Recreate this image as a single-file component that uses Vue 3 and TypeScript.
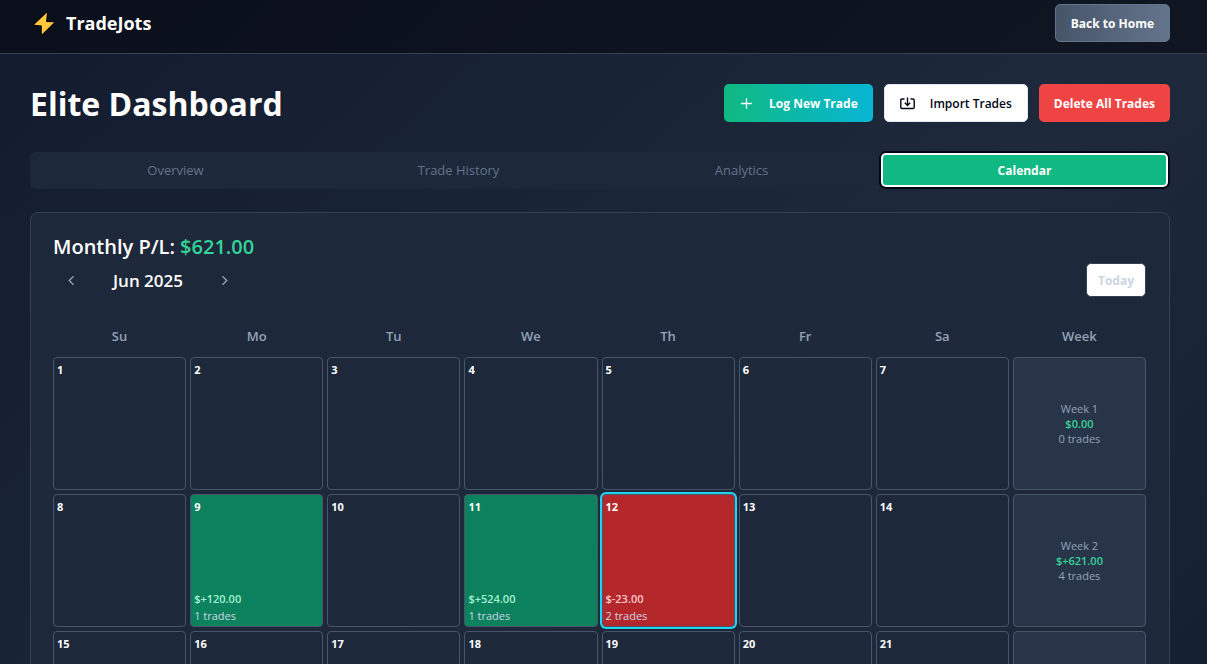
<script setup lang="ts">
import { computed, ref } from 'vue'

interface DayResult {
  pnl: number
  trades: number
}

const tabs = ['Overview', 'Trade History', 'Analytics', 'Calendar']
const activeTab = ref('Calendar')
const weekdays = ['Su', 'Mo', 'Tu', 'We', 'Th', 'Fr', 'Sa', 'Week']
const today = 12
const daysInMonth = 30

const results: Record<number, DayResult> = {
  9: { pnl: 120, trades: 1 },
  11: { pnl: 524, trades: 1 },
  12: { pnl: -23, trades: 2 },
}

const weeks = computed(() =>
  Array.from({ length: 5 }, (_, w) => {
    const days = Array.from({ length: 7 }, (_, d) => w * 7 + d + 1).filter((d) => d <= daysInMonth)
    return {
      number: w + 1,
      days,
      blanks: 7 - days.length,
      pnl: days.reduce((sum, d) => sum + (results[d]?.pnl ?? 0), 0),
      trades: days.reduce((sum, d) => sum + (results[d]?.trades ?? 0), 0),
    }
  }),
)

const monthTotal = computed(() => weeks.value.reduce((sum, w) => sum + w.pnl, 0))

function signed(value: number): string {
  return '$' + (value > 0 ? '+' : '') + value.toFixed(2)
}

function tone(day: number): string {
  const result = results[day]
  if (!result) return ''
  return result.pnl > 0 ? 'win' : 'loss'
}
</script>

<template>
  <div class="page">
    <header class="topbar">
      <a class="brand" href="#">
        <svg class="bolt" viewBox="0 0 28 28" aria-hidden="true">
          <path d="M17 3.5 4 15.7 11.8 16.6 11.8 25.5 24.3 13.3 16 12.9Z" />
        </svg>
        <span>TradeJots</span>
      </a>
      <button type="button" class="btn home">Back to Home</button>
    </header>

    <main class="content">
      <div class="heading">
        <h1>Elite Dashboard</h1>
        <div class="actions">
          <button type="button" class="btn log">
            <svg viewBox="0 0 15 15" aria-hidden="true"><path d="M7.5 2.2v10.6M2.2 7.5h10.6" /></svg>
            <span>Log New Trade</span>
          </button>
          <button type="button" class="btn import">
            <svg viewBox="0 0 15 15" aria-hidden="true">
              <path d="M4.5 3H2Q.8 3 .8 4.2v7.1q0 1.2 1.2 1.2h11q1.2 0 1.2-1.2V4.2Q14.2 3 13 3h-2.5M7.5 1.5v8M4.8 6.8l2.7 2.7 2.7-2.7" />
            </svg>
            <span>Import Trades</span>
          </button>
          <button type="button" class="btn delete">Delete All Trades</button>
        </div>
      </div>

      <div class="tabs" role="tablist">
        <button
          v-for="tab in tabs"
          :key="tab"
          type="button"
          role="tab"
          class="tab"
          :class="{ active: tab === activeTab }"
          :aria-selected="tab === activeTab"
          @click="activeTab = tab"
        >
          {{ tab }}
        </button>
      </div>

      <section class="card">
        <h2>Monthly P/L: <span class="gain">${{ monthTotal.toFixed(2) }}</span></h2>
        <div class="monthnav">
          <button type="button" class="arrow" aria-label="Previous month">
            <svg viewBox="0 0 15 15" aria-hidden="true"><path d="M9.5 3.2 5.2 7.5l4.3 4.3" /></svg>
          </button>
          <h3>Jun 2025</h3>
          <button type="button" class="arrow" aria-label="Next month">
            <svg viewBox="0 0 15 15" aria-hidden="true"><path d="m5.5 3.2 4.3 4.3-4.3 4.3" /></svg>
          </button>
          <button type="button" class="today" disabled>Today</button>
        </div>

        <div class="grid">
          <div v-for="name in weekdays" :key="name" class="weekday">{{ name }}</div>
          <template v-for="week in weeks" :key="week.number">
            <button
              v-for="day in week.days"
              :key="day"
              type="button"
              class="cell day"
              :class="[tone(day), { current: day === today }]"
            >
              <span class="num">{{ day }}</span>
              <span v-if="results[day]" class="result">
                <strong>{{ signed(results[day].pnl) }}</strong>
                <span>{{ results[day].trades }} trades</span>
              </span>
            </button>
            <div v-for="blank in week.blanks" :key="'b' + blank" class="cell"></div>
            <div class="cell summary">
              <span>Week {{ week.number }}</span>
              <strong>{{ signed(week.pnl) }}</strong>
              <span>{{ week.trades }} trades</span>
            </div>
          </template>
        </div>
      </section>
    </main>
  </div>
</template>

<style>
html {
  scrollbar-width: none;
}
body {
  margin: 0;
  background: #0f172a;
}
</style>

<style scoped>
.page {
  min-height: 100vh;
  background: linear-gradient(to bottom right, #131b2f, #1e293b, #111a2d);
  color: #fff;
  font-family: 'Segoe UI', 'Open Sans', 'Noto Sans', sans-serif;
  font-size: 13px;
}
.page * {
  box-sizing: border-box;
}
button {
  font: inherit;
  color: inherit;
  cursor: pointer;
}
svg {
  fill: none;
  stroke: currentColor;
}
.topbar {
  display: flex;
  align-items: center;
  justify-content: space-between;
  padding: 4px 37px 11px 30px;
  border-bottom: 1px solid #334155;
  background: rgba(2, 3, 8, 0.5);
}
.brand {
  display: flex;
  align-items: center;
  gap: 8px;
  color: #fff;
  font-size: 18px;
  font-weight: 700;
  text-decoration: none;
}
.bolt {
  width: 28px;
  height: 28px;
  fill: #ffc83d;
  stroke: #000;
  stroke-width: 2;
  stroke-linejoin: round;
  paint-order: stroke;
}
.btn {
  display: flex;
  align-items: center;
  height: 38px;
  padding: 0 15px;
  border: 0;
  border-radius: 5px;
  font-size: 12px;
  font-weight: 700;
  white-space: nowrap;
}
.btn svg {
  width: 15px;
  height: 15px;
  margin-right: 15px;
}
.home {
  border: 1px solid #64748b;
  background: linear-gradient(to right, #475569, #64748b);
}
.content {
  padding: 30px 37px 30px 30px;
}
.heading {
  display: flex;
  align-items: center;
  justify-content: space-between;
  height: 38px;
}
h1,
h2,
h3 {
  margin: 0;
}
h1 {
  padding-top: 2px;
  font-size: 32px;
  line-height: 38px;
  font-weight: 700;
}
.actions {
  display: flex;
  gap: 11px;
}
.log {
  background: linear-gradient(to right, #10b981, #06b6d4);
}
.log svg {
  stroke-width: 1.3;
}
.import {
  border: 1px solid #e2e8f0;
  background: #fff;
  color: #020617;
  font-weight: 600;
}
.import svg {
  stroke-width: 1.4;
}
.delete {
  background: #ef4444;
}
.tabs {
  display: grid;
  grid-template-columns: repeat(4, 1fr);
  margin-top: 30px;
  padding: 3px 4px 4px;
  border-radius: 6px;
  background: rgba(30, 41, 59, 0.9);
}
.tab {
  height: 30px;
  padding: 0;
  border: 0;
  border-radius: 3px;
  background: none;
  color: #64748b;
  font-weight: 500;
}
.tab.active {
  background: #10b981;
  color: #fff;
  font-size: 12px;
  font-weight: 700;
  box-shadow: 0 0 0 2px #fff, 0 0 0 4px #020617;
}
.card {
  margin-top: 23px;
  padding: 22px 23px 22px 22px;
  border: 1px solid #334155;
  border-radius: 8px;
  background: rgba(30, 41, 59, 0.9);
}
h2 {
  font-size: 20px;
  line-height: 24px;
  font-weight: 600;
}
.gain {
  color: #34d399;
}
.monthnav {
  display: flex;
  align-items: center;
  height: 34px;
  margin-top: 4px;
}
.arrow {
  display: grid;
  place-items: center;
  width: 37px;
  height: 34px;
  padding: 0;
  border: 0;
  background: none;
  color: #94a3b8;
}
.arrow svg {
  width: 15px;
  height: 15px;
  stroke-width: 1.3;
}
h3 {
  width: 116px;
  font-size: 17px;
  font-weight: 600;
  text-align: center;
}
.today {
  height: 34px;
  margin-left: auto;
  padding: 0 11px;
  border: 1px solid #334155;
  border-radius: 5px;
  background: #fff;
  color: #cbd5e1;
  font-size: 12px;
  font-weight: 700;
}
.grid {
  display: grid;
  grid-template-columns: repeat(8, minmax(0, 1fr));
  gap: 4px;
  margin-top: 22px;
}
.weekday {
  height: 34px;
  color: #94a3b8;
  font-weight: 600;
  line-height: 34px;
  text-align: center;
}
.cell {
  display: flex;
  flex-direction: column;
  aspect-ratio: 1;
  padding: 4px 3px;
  border: 1px solid #475569;
  border-radius: 4px;
  background: none;
  font-size: 11px;
  line-height: 15px;
  text-align: left;
}
.day {
  justify-content: space-between;
}
.num {
  font-weight: 700;
}
.win {
  background: #0b815e;
}
.loss {
  background: #b4282b;
}
.current {
  box-shadow: 0 0 0 2px #22d3ee;
}
.result {
  display: flex;
  flex-direction: column;
  gap: 2px;
  margin-bottom: -1px;
  color: #cbd5e1;
}
strong {
  font-weight: 600;
}
.win strong {
  color: #a7f3d0;
}
.loss strong {
  color: #fecaca;
}
.summary {
  align-items: center;
  justify-content: center;
  background: rgba(51, 65, 85, 0.5);
  color: #94a3b8;
}
.summary strong {
  color: #34d399;
}
</style>
